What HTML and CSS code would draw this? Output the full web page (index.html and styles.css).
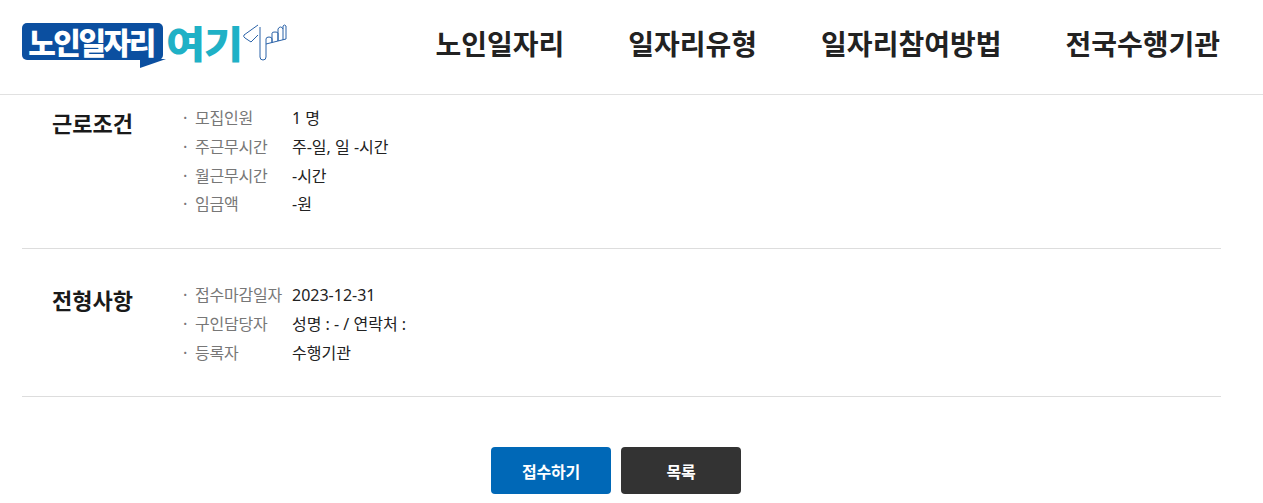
FILE: index.html
```html
<!DOCTYPE html>
<html lang="ko">
<head>
<meta charset="utf-8">
<title>노인일자리 여기</title>
<link rel="stylesheet" href="styles.css">
</head>
<body>
<header class="header">
  <a class="logo" href="#">
    <span class="logo-bubble">노인일자리<svg class="logo-tail" width="26" height="10" viewBox="0 0 26 10"><path d="M0 0H26L0 9Z" fill="#0b4fa0"/></svg></span>
    <span class="logo-here">여기</span>
    <svg class="logo-hand" width="46" height="40" viewBox="0 0 46 40" fill="none" stroke="#2a62a8" stroke-width="1"><path d="M15 2L1 12Q0 14 2 15L8 19L15 12"/><path d="M17 4V34Q17 37 20 37Q23 37 23 34V21L43 16V3Q41.500 1 40 3V17"/><path d="M23 21V16Q23 14 26 14Q29 14 29 16V19.500M29 19.500V10Q29 9 32 9Q35 9 35 10V18M35 18V6Q36 4 37.500 4Q39 4 40 6"/></svg>
  </a>
  <nav class="nav">
    <a href="#">노인일자리</a>
    <a href="#">일자리유형</a>
    <a href="#">일자리참여방법</a>
    <a href="#">전국수행기관</a>
  </nav>
</header>
<main class="main">
  <section class="section first">
    <h2 class="title">근로조건</h2>
    <dl class="rows">
      <div class="row"><dt>모집인원</dt><dd>1 명</dd></div>
      <div class="row"><dt>주근무시간</dt><dd>주-일, 일 -시간</dd></div>
      <div class="row"><dt>월근무시간</dt><dd>-시간</dd></div>
      <div class="row"><dt>임금액</dt><dd>-원</dd></div>
    </dl>
  </section>
  <section class="section second">
    <h2 class="title">전형사항</h2>
    <dl class="rows">
      <div class="row"><dt>접수마감일자</dt><dd>2023-12-31</dd></div>
      <div class="row"><dt>구인담당자</dt><dd>성명 : - / 연락처 :</dd></div>
      <div class="row"><dt>등록자</dt><dd>수행기관</dd></div>
    </dl>
  </section>
  <div class="buttons">
    <a class="btn btn-blue" href="#">접수하기</a>
    <a class="btn btn-dark" href="#">목록</a>
  </div>
</main>
</body>
</html>
```
FILE: styles.css
```css
* { box-sizing: border-box; }
html, body { margin: 0; padding: 0; height: 503px; overflow: hidden; background: #fff; }
body { font-family: "Noto Sans CJK KR", "Noto Sans", sans-serif; color: #222; }
a { text-decoration: none; color: inherit; }

.header {
  height: 95px;
  border-bottom: 1px solid #e1e1e1;
  display: flex;
  align-items: center;
  justify-content: space-between;
  padding: 0 43px 0 22px;
}
.logo { display: flex; align-items: flex-start; height: 48px; }
.logo-bubble {
  position: relative;
  width: 141px;
  height: 37px;
  padding-right: 3px;
  background: #0b4fa0;
  border-radius: 5px;
  color: #fff;
  font-size: 30px;
  font-weight: 900;
  line-height: 36px;
  text-align: center;
  letter-spacing: -2.5px;
  white-space: nowrap;
}
.logo-tail { position: absolute; left: 118px; top: 36px; }
.logo-here {
  display: inline-block;
  width: 76px;
  margin-left: 3px;
  color: #1fb1c6;
  font-size: 38px;
  font-weight: 900;
  line-height: 37px;
  letter-spacing: -1px;
  white-space: nowrap;
  transform: scaleX(1.12);
  transform-origin: left center;
}
.logo-hand { margin-left: 1px; width: 46px; height: 40px; }

.nav { display: flex; gap: 64px; font-size: 28px; font-weight: 700; color: #222; line-height: 40px; margin-bottom: 8px; }

.main { padding: 0 42px 0 22px; }
.section { display: flex; border-bottom: 1px solid #ddd; padding-left: 30px; }
.section.first { height: 154px; padding-top: 8px; }
.section.second { height: 148px; padding-top: 31px; }
.title { width: 131px; margin: 5px 0 0; font-size: 22px; font-weight: 700; line-height: 29px; color: #1a1a1a; }
.rows { margin: 0; }
.row { display: flex; height: 28.8px; line-height: 28.8px; font-size: 16px; letter-spacing: -0.2px; }
.row dt { position: relative; width: 109px; padding-left: 12px; color: #777; font-weight: 400; }
.row dt::before { content: "·"; position: absolute; left: 0; top: 0; color: #777; }
.row dd { margin: 0; padding-top: 1px; color: #222; font-family: "Noto Sans", "Noto Sans CJK KR", sans-serif; letter-spacing: 0; }

.buttons { display: flex; justify-content: center; gap: 10px; margin-top: 50px; padding-right: 11px; }
.btn {
  width: 120px;
  height: 47px;
  border-radius: 4px;
  display: flex;
  align-items: center;
  justify-content: center;
  color: #fff;
  font-size: 16px;
  font-weight: 700;
  letter-spacing: -0.2px;
}
.btn-blue { background: #0068b7; }
.btn-dark { background: #333; }
```
